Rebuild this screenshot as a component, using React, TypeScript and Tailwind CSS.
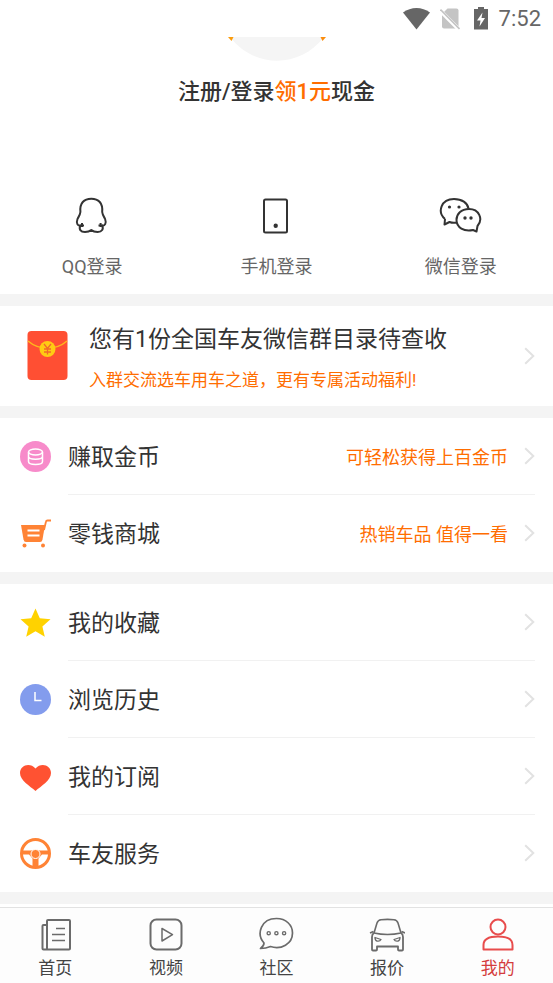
import type { ReactNode } from "react";

function StatusBar() {
  return (
    <div className="flex h-[37px] shrink-0 items-center justify-end bg-white pr-3 text-[#666666]">
      <svg aria-hidden="true" className="mr-[10px] h-[22px] w-[27px]" viewBox="0 0 27 22">
        <path d="M0 4.5C8 -1.5 19 -1.5 27 4.5L13.5 21.5Z" fill="currentColor" />
      </svg>
      <svg aria-hidden="true" className="mr-[13px] h-[22px] w-5" viewBox="0 0 20 22">
        <path d="M7.5 0.5H16.5Q18.5 0.5 18.5 2.5V20.5H4Q2 20.5 2 18.5V6Z" fill="#c4c4c4" />
        <path d="M0 2.5L19 21.5" stroke="#fff" strokeWidth="4" />
        <path d="M0.5 1.5L19.5 21" stroke="#c4c4c4" strokeWidth="1.6" />
      </svg>
      <svg aria-hidden="true" className="mr-[10px] h-[23px] w-4" viewBox="0 0 16 23">
        <path d="M5 0H11V2H15V22.5H1V2H5Z" fill="currentColor" />
        <path d="M9.5 5.5L4 13.5H7.5L6.5 19.5L12 11H8.5Z" fill="#fff" />
      </svg>
      <time className="text-[22px] leading-6">7:52</time>
    </div>
  );
}

function Avatar() {
  return (
    <svg aria-hidden="true" className="h-6 w-[98px]" viewBox="0 0 98 24">
      <path d="M2 0C26 31.5 72 31.5 96 0Z" fill="#f5f5f5" />
      <path d="M0 0H5.5L3.5 4Z" fill="#fb9c0c" />
      <path d="M92.5 0H98L94.5 4Z" fill="#fb8c0c" />
    </svg>
  );
}

function LoginButton({ children, label }: { children: ReactNode; label: string }) {
  return (
    <button className="flex flex-col items-center text-[18px] leading-6 text-[#666666]" type="button">
      <svg
        aria-hidden="true"
        className="mb-5 h-10 w-11"
        fill="none"
        stroke="#333333"
        strokeLinejoin="round"
        strokeWidth="2"
        viewBox="0 0 44 40"
      >
        {children}
      </svg>
      {label}
    </button>
  );
}

function Chevron() {
  return (
    <svg aria-hidden="true" className="h-[18px] w-[11px] shrink-0" fill="none" viewBox="0 0 11 18">
      <path d="M1.2 1.2L9.3 9L1.2 16.8" stroke="#e2e2e2" strokeWidth="2" />
    </svg>
  );
}

function MenuRow({ children, hint, label }: { children: ReactNode; hint?: string; label: string }) {
  return (
    <a className="group flex items-center pr-[18px] pl-5" href="#">
      <svg aria-hidden="true" className="mr-[17px] h-[31px] w-[31px] shrink-0" fill="none" viewBox="0 0 31 31">
        {children}
      </svg>
      <span className="flex h-[77px] flex-1 items-center border-b border-[#f1f1f1] group-last:border-transparent">
        <span className="flex-1 pt-1 text-[23px] leading-8 text-[#333333]">{label}</span>
        {hint ? <span className="mr-4 pt-1 text-[18px] leading-6 text-[#ff6d00]">{hint}</span> : null}
        <Chevron />
      </span>
    </a>
  );
}

function TabLink({ active = false, children, label }: { active?: boolean; children: ReactNode; label: string }) {
  return (
    <a
      aria-current={active ? "page" : undefined}
      className={
        active
          ? "flex flex-col items-center pt-2 text-[17px] leading-6 text-[#d43c3c]"
          : "flex flex-col items-center pt-2 text-[17px] leading-6 text-[#444444]"
      }
      href="#"
    >
      <svg
        aria-hidden="true"
        className="mb-1 h-9 w-9"
        fill="none"
        stroke={active ? "#e84c4c" : "#6b6b6b"}
        strokeLinejoin="round"
        strokeWidth="2"
        viewBox="0 0 36 36"
      >
        {children}
      </svg>
      {label}
    </a>
  );
}

export default function App() {
  return (
    <div className="flex h-screen flex-col bg-white font-[Roboto,'Noto_Sans_CJK_SC',sans-serif]">
      <StatusBar />

      <main className="min-h-0 flex-1 overflow-hidden">
        <section className="flex flex-col items-center bg-white">
          <Avatar />
          <h1 className="mt-[17px] text-[22px] leading-7 font-medium text-[#333333]">
            注册/登录<span className="text-[#ff6d00]">领1元</span>现金
          </h1>
          <div className="mt-[89px] grid w-full grid-cols-3 pb-[15px]">
            <LoginButton label="QQ登录">
              <path d="M11 30.5C7.5 31.5 6 28 7.5 24C8.3 22 10 20.5 10.4 17C9.5 8 14 3.7 21.3 3.7S33 8 32.2 17C32.6 20.5 34.3 22 35.1 24C36.6 28 35 31.5 31.6 30.5" />
              <path d="M9.5 30.5H14M12 28V32M33 30.5H28.5M30.6 28V32" />
              <path d="M10.5 30.5C8.5 34 10.5 37 15 37C18 37 19.5 36.5 21.3 35C23 36.5 24.6 37 27.6 37C32 37 34 34 32 30.5" />
            </LoginButton>
            <LoginButton label="手机登录">
              <rect height="33" rx="1.5" width="23" x="10" y="4.5" />
              <circle cx="21.7" cy="30.8" fill="#333333" r="1.2" />
            </LoginButton>
            <LoginButton label="微信登录">
              <path d="M6 24C-2 17 2 4 15 4C23 4 28.5 8 29.5 13.5M6 24L5.5 29.5L10.5 27C13 28 15.5 28 18 27.5" />
              <path d="M38.5 31C44.5 24 40 14 30 14C22 14 17.5 19 17.5 25C17.5 32.5 25 37 34 35L37.5 36.5Z" />
              <g fill="#333333" stroke="none">
                <circle cx="10.5" cy="12" r="1.6" />
                <circle cx="20" cy="12" r="1.6" />
                <circle cx="26" cy="23" r="1.7" />
                <circle cx="32" cy="23" r="1.7" />
              </g>
            </LoginButton>
          </div>
        </section>

        <div className="border-y-12 border-[#f4f4f4] bg-white">
          <a className="flex h-[100px] items-center pr-[18px] pl-[27px]" href="#">
            <svg aria-hidden="true" className="mr-[21px] h-[50px] w-[41px] shrink-0" viewBox="0 0 41 50">
              <rect fill="#ff4f33" height="49" rx="4" width="40" x="0.5" />
              <path d="M1 10C12 19.5 29 19.5 40 10" fill="none" stroke="#fdb81c" strokeWidth="1.5" />
              <circle cx="20.5" cy="18" fill="#ffcb13" r="8" />
              <path
                d="M17 13L20.5 17.5L24 13M20.5 17.5V23.5M17 18H24M17 21H24"
                fill="none"
                stroke="#f2682b"
                strokeWidth="1.3"
              />
            </svg>
            <span className="flex-1 pt-1">
              <span className="block text-[23px] leading-8 text-[#333333]">您有1份全国车友微信群目录待查收</span>
              <span className="mt-3 block text-[17px] leading-6 text-[#ff6d00]">
                入群交流选车用车之道，更有专属活动福利!
              </span>
            </span>
            <Chevron />
          </a>
        </div>

        <div className="border-b-12 border-[#f4f4f4] bg-white">
          <MenuRow hint="可轻松获得上百金币" label="赚取金币">
            <circle cx="15.5" cy="15.5" fill="#f78bca" r="15.5" />
            <ellipse cx="15.5" cy="11" rx="7" ry="3" stroke="#fff" strokeWidth="1.5" />
            <path
              d="M8.5 11V20.5C8.5 24.5 22.5 24.5 22.5 20.5V11M8.5 15.5C8.5 19 22.5 19 22.5 15.5"
              stroke="#fff"
              strokeWidth="1.5"
            />
          </MenuRow>
          <MenuRow hint="热销车品 值得一看" label="零钱商城">
            <path d="M1 7H25L22.5 21.5Q22 24 20 24H6Q4 24 3.5 21.5Z" fill="#ff8335" />
            <path d="M24 12L26 3.5Q26.2 2.5 27.5 2.5H31" stroke="#ff8335" strokeWidth="1.8" />
            <path d="M7.5 12.5H19.5M7.5 17.5H19.5" stroke="#fff" strokeWidth="1.8" />
            <circle cx="4.5" cy="27.5" fill="#ff8335" r="2" />
            <circle cx="23" cy="27.5" fill="#ff8335" r="2" />
          </MenuRow>
        </div>

        <div className="border-b-12 border-[#f4f4f4] bg-white">
          <MenuRow label="我的收藏">
            <path
              d="M15.5 1.5L19.8 11.2L30.5 12.2L22.4 19.4L24.8 29.8L15.5 24.3L6.2 29.8L8.6 19.4L0.5 12.2L11.2 11.2Z"
              fill="#ffd200"
            />
          </MenuRow>
          <MenuRow label="浏览历史">
            <circle cx="15.5" cy="15.5" fill="#839ced" r="15.5" />
            <path d="M15 8V16.5H21.5" stroke="#fff" strokeWidth="1.5" />
          </MenuRow>
          <MenuRow label="我的订阅">
            <path d="M15.5 30C10 25 0 19.5 0 12C0 4 10 1 15.5 7.5C21 1 31 4 31 12C31 19.5 21 25 15.5 30Z" fill="#ff5232" />
          </MenuRow>
          <MenuRow label="车友服务">
            <circle cx="15.5" cy="15.5" r="14" stroke="#ff8335" strokeWidth="3" />
            <path d="M2 12.5H29V16.5H22L18.5 20.5V29H12.5V20.5L9 16.5H2Z" fill="#ff8335" />
            <circle cx="15.5" cy="16" fill="#ff8335" r="4.5" stroke="#fff" strokeWidth="1" />
          </MenuRow>
        </div>
      </main>

      <nav className="grid h-[76px] shrink-0 grid-cols-5 border-t border-[#e2e2e2] bg-[#fdfdfd]">
        <TabLink label="首页">
          <path d="M10 33.5V5Q10 4 11 4H32Q33 4 33 5V32.5Q33 33.5 32 33.5H6.5Q5.5 33.5 5.5 32.5V10Q5.5 9 6.5 9H10" />
          <path d="M19 12.5H28M15 18.5H28M15 24.5H28" strokeWidth="1.5" />
        </TabLink>
        <TabLink label="视频">
          <rect height="30" rx="6" width="31" x="2.5" y="3.5" />
          <path d="M14 12.5V25L24.5 18.7Z" strokeWidth="1.5" />
        </TabLink>
        <TabLink label="社区">
          <path
            d="M6 27C-2 18 3 2.5 18.5 2.5C28 2.5 34.5 9 34.5 17C34.5 28 23 34 12.5 30.5C9 32 6 32.5 2.5 32.5Q6 30 6 27Z"
            strokeWidth="1.7"
          />
          <g strokeWidth="1.4">
            <circle cx="10.7" cy="17.2" r="1.6" />
            <circle cx="18.4" cy="17.2" r="1.6" />
            <circle cx="26.1" cy="17.2" r="1.6" />
          </g>
        </TabLink>
        <TabLink label="报价">
          <path d="M5 17L8 7Q9 4 12 3.7Q18.5 3 25 3.7Q28 4 29 7L32 17M5 17Q18.5 20 32 17" strokeWidth="1.6" />
          <path
            d="M1 17L4.5 15.5M36 17L32.5 15.5M5 17Q3 18 3 21V33.5Q3 34.5 4 34.5H7Q8 34.5 8 33.5V30.5H29V33.5Q29 34.5 30 34.5H33Q34 34.5 34 33.5V21Q34 18 32 17"
            strokeWidth="1.8"
          />
          <path d="M6 21.5L12 23.5Q11 25.5 8 25Q6 24.5 6 21.5ZM31 21.5L25 23.5Q26 25.5 29 25Q31 24.5 31 21.5Z" strokeWidth="1.3" />
        </TabLink>
        <TabLink active label="我的">
          <circle cx="18" cy="11" r="7.5" />
          <path d="M3.5 33.5V29C3.5 23.5 9 20.5 18 20.5S32.5 23.5 32.5 29V33.5Z" />
        </TabLink>
      </nav>
    </div>
  );
}
